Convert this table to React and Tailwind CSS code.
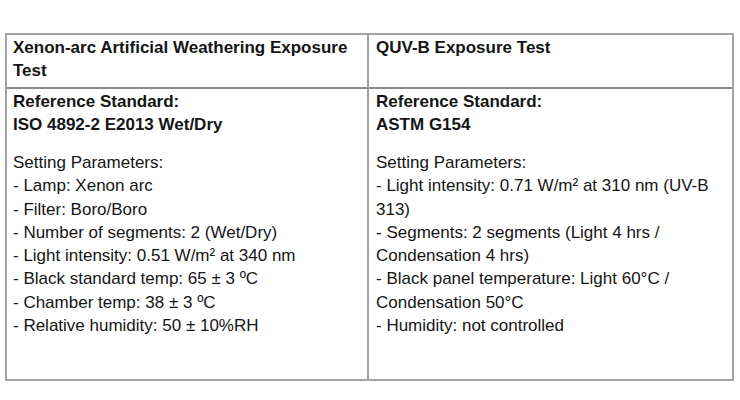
const columns = [
	{
		title: "Xenon-arc Artificial Weathering Exposure Test",
		standard: "ISO 4892-2 E2013 Wet/Dry",
		params: [
			"- Lamp: Xenon arc",
			"- Filter: Boro/Boro",
			"- Number of segments: 2 (Wet/Dry)",
			"- Light intensity: 0.51 W/m² at 340 nm",
			"- Black standard temp: 65 ± 3 ºC",
			"- Chamber temp: 38 ± 3 ºC",
			"- Relative humidity: 50 ± 10%RH",
		],
	},
	{
		title: "QUV-B Exposure Test",
		standard: "ASTM G154",
		params: [
			"- Light intensity: 0.71 W/m² at 310 nm (UV-B 313)",
			"- Segments: 2 segments (Light 4 hrs / Condensation 4 hrs)",
			"- Black panel temperature: Light 60°C / Condensation 50°C",
			"- Humidity: not controlled",
		],
	},
];

export default function App() {
	return (
		<div className="w-[740px] h-[400px] bg-white pt-[33px] pl-[5px]">
			<div className="w-[729px] border-2 border-[#a3a3a3] grid grid-cols-[362px_1fr] font-['Liberation_Sans',Arial,sans-serif] text-[17px] leading-[23px] text-[#151515]">
				{/* header row */}
				{columns.map((col, i) => (
					<div
						key={"h" + i}
						className={`h-[54px] border-b-2 border-[#8a8a8a] pl-[6px] pr-2 pt-[1px] font-bold ${
							i === 0 ? "border-r-2 border-r-[#a3a3a3]" : "pl-[7px]"
						}`}
					>
						{col.title}
					</div>
				))}

				{/* body row */}
				{columns.map((col, i) => (
					<div
						key={"b" + i}
						className={`h-[290px] pl-[6px] pr-3 pt-[1px] ${
							i === 0 ? "border-r-2 border-[#a3a3a3]" : "pl-[7px]"
						}`}
					>
						<div className="font-bold">
							<p>Reference Standard:</p>
							<p>{col.standard}</p>
						</div>
						<div className="mt-[15px] leading-[23.3px]">
							<p>Setting Parameters:</p>
							{col.params.map((p, idx) => (
								<p key={idx}>{p}</p>
							))}
						</div>
					</div>
				))}
			</div>
		</div>
	);
}
